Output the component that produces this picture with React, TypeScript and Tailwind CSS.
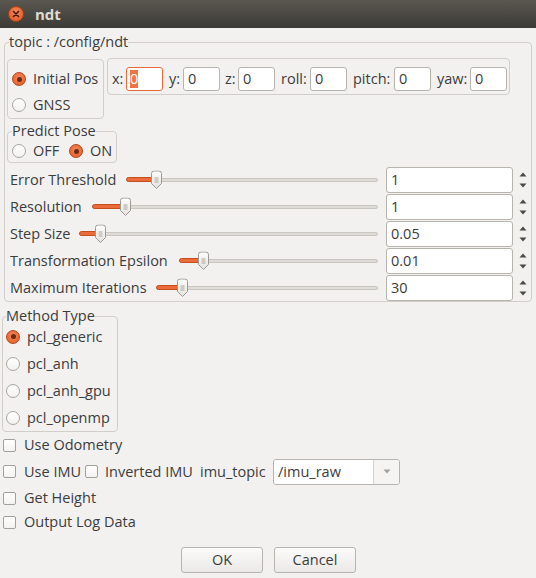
import React from 'react';

const Radio = ({ checked }: { checked?: boolean }) =>
  checked ? (
    <span className="w-[14px] h-[14px] rounded-full border border-[#b8461a] bg-[radial-gradient(circle_at_50%_40%,#f68a5c,#e2561f)] flex items-center justify-center shrink-0">
      <span className="w-[5px] h-[5px] rounded-full bg-[#6b2a12]" />
    </span>
  ) : (
    <span className="w-[14px] h-[14px] rounded-full border border-[#a9a6a0] bg-linear-to-b from-white to-[#f3f2f0] shrink-0" />
  );

const Check = () => (
  <span className="w-[13px] h-[13px] rounded-[2px] border border-[#a3a09a] bg-linear-to-b from-white to-[#f3f2f0] shrink-0" />
);

const Handle = ({ left }: { left: number }) => (
  <svg
    width="13"
    height="19"
    viewBox="0 0 13 19"
    className="absolute top-1/2 -translate-y-1/2"
    style={{ left }}
  >
    <defs>
      <linearGradient id="hg" x1="0" y1="0" x2="0" y2="1">
        <stop offset="0" stopColor="#fdfdfc" />
        <stop offset="1" stopColor="#e4e2de" />
      </linearGradient>
    </defs>
    <path
      d="M1.5 3 Q1.5 0.5 4 0.5 H9 Q11.5 0.5 11.5 3 V13 L6.5 18 L1.5 13 Z"
      fill="url(#hg)"
      stroke="#9c9993"
    />
    <path d="M4.5 7.5 H8.5 M4.5 9.5 H8.5 M4.5 11.5 H8.5" stroke="#a9a69f" strokeWidth="1" />
  </svg>
);

const Slider = ({ pos }: { pos: number }) => (
  <div className="flex-1 relative h-full flex items-center">
    <div className="w-full h-[4px] rounded-full bg-[#dedcd8] border border-[#c9c6c0]" />
    <div
      className="absolute left-0 h-[5px] rounded-full bg-[#ec6b3a] border border-[#c44f1e]"
      style={{ width: pos + 2 }}
    />
    <Handle left={pos - 6} />
  </div>
);

const SpinArrows = () => (
  <div className="w-[18px] flex flex-col items-center justify-center gap-[6px] pl-[1px]">
    <svg width="8" height="5" viewBox="0 0 8 5">
      <path d="M4 0.5 L7.5 4.5 H0.5 Z" fill="#4a4a4a" />
    </svg>
    <svg width="8" height="5" viewBox="0 0 8 5">
      <path d="M0.5 0.5 H7.5 L4 4.5 Z" fill="#4a4a4a" />
    </svg>
  </div>
);

const sliders = [
  { label: 'Error Threshold', w: 'w-[116px]', pos: 30, value: '1' },
  { label: 'Resolution', w: 'w-[82px]', pos: 33, value: '1' },
  { label: 'Step Size', w: 'w-[69px]', pos: 21, value: '0.05' },
  { label: 'Transformation Epsilon', w: 'w-[169px]', pos: 24, value: '0.01' },
  { label: 'Maximum Iterations', w: 'w-[146px]', pos: 26, value: '30' },
];

const coords = [
  { label: 'x:', w: 'w-[14px]', ml: '' },
  { label: 'y:', w: 'w-[14px]', ml: 'ml-[6px]' },
  { label: 'z:', w: 'w-[13px]', ml: 'ml-[5px]' },
  { label: 'roll:', w: 'w-[29px]', ml: 'ml-[6px]' },
  { label: 'pitch:', w: 'w-[41px]', ml: 'ml-[6px]' },
  { label: 'yaw:', w: 'w-[33px]', ml: 'ml-[6px]' },
];

const methods = ['pcl_generic', 'pcl_anh', 'pcl_anh_gpu', 'pcl_openmp'];

export default function App() {
  return (
    <div className="w-[536px] h-[578px] bg-[#f2f1f0] flex flex-col font-['Open_Sans',sans-serif] text-[14.5px] leading-[18px] text-[#3c3c3c] overflow-hidden">
      {/* title bar */}
      <div className="h-[28px] shrink-0 flex items-center pl-[8px] bg-linear-to-b from-[#5a5750] to-[#3c3b37]">
        <span className="w-[16px] h-[16px] rounded-full border border-[#a8411a] bg-[radial-gradient(circle_at_50%_35%,#f58657,#df5420)] flex items-center justify-center">
          <svg width="8" height="8" viewBox="0 0 8 8">
            <path d="M1.5 1.5 L6.5 6.5 M6.5 1.5 L1.5 6.5" stroke="#4a1a08" strokeWidth="1.6" strokeLinecap="round" />
          </svg>
        </span>
        <span className="ml-[11px] text-[15px] font-bold text-[#dfdbd2]">ndt</span>
      </div>

      {/* topic group */}
      <fieldset className="ml-[4px] mt-[5px] w-[528px] border border-[#d2cfca] rounded-[4px]">
        <legend className="ml-[4px]">topic : /config/ndt</legend>
        <div className="flex flex-col pl-[2px] pt-[7px]">
          <div className="flex items-start gap-[3px]">
            <div className="mt-[1px] w-[97px] h-[60px] border border-[#d2cfca] rounded-[4px] pt-[6px] pl-[4px] flex flex-col">
              <div className="h-[26px] flex items-center gap-[7px]">
                <Radio checked />
                <span>Initial Pos</span>
              </div>
              <div className="h-[26px] flex items-center gap-[7px]">
                <Radio />
                <span>GNSS</span>
              </div>
            </div>
            <div className="w-[403px] h-[37px] border border-[#d2cfca] rounded-[4px] pt-[8px] pl-[4px] flex items-start">
              {coords.map((c, i) => (
                <div key={c.label} className={`flex items-center ${c.ml}`}>
                  <span className={`${c.w} h-[24px] flex items-center`}>{c.label}</span>
                  {i === 0 ? (
                    <div className="w-[37px] h-[24px] bg-white border border-[#e8683a] rounded-[3px] flex items-center pl-[3px]">
                      <span className="bg-[#ef7444] text-white leading-[18px]">0</span>
                    </div>
                  ) : (
                    <div className="w-[37px] h-[24px] bg-white border border-[#b7b4ae] rounded-[3px] flex items-center pl-[4px]">
                      0
                    </div>
                  )}
                </div>
              ))}
            </div>
          </div>

          <fieldset className="mt-[3px] w-[110px] border border-[#d2cfca] rounded-[4px]">
            <legend className="ml-[4px]">Predict Pose</legend>
            <div className="h-[22px] flex items-center pl-[4px]">
              <Radio />
              <span className="ml-[7px] w-[36px]">OFF</span>
              <Radio checked />
              <span className="ml-[7px]">ON</span>
            </div>
          </fieldset>

          <div className="mt-[3px] flex flex-col">
            {sliders.map((s) => (
              <div key={s.label} className="h-[27px] flex items-center pl-[3px]">
                <span className={`${s.w} shrink-0 whitespace-nowrap`}>{s.label}</span>
                <Slider pos={s.pos} />
                <div className="ml-[8px] w-[127px] h-[26px] bg-white border border-[#b7b4ae] rounded-[3px] flex items-center pl-[4px] shrink-0">
                  {s.value}
                </div>
                <SpinArrows />
              </div>
            ))}
          </div>
        </div>
      </fieldset>

      {/* method type */}
      <fieldset className="ml-[2px] mt-[5px] w-[116px] border border-[#d2cfca] rounded-[4px]">
        <legend className="ml-[3px]">Method Type</legend>
        <div className="mt-[-2px] flex flex-col pl-[3px]">
          {methods.map((m, i) => (
            <div key={m} className="h-[27px] flex items-center gap-[7px]">
              <Radio checked={i === 0} />
              <span>{m}</span>
            </div>
          ))}
        </div>
      </fieldset>

      {/* checkboxes */}
      <div className="flex flex-col pl-[3px]">
        <div className="h-[26px] flex items-center gap-[8px]">
          <Check />
          <span>Use Odometry</span>
        </div>
        <div className="h-[27px] flex items-center">
          <Check />
          <span className="ml-[8px] w-[61px] whitespace-nowrap">Use IMU</span>
          <Check />
          <span className="ml-[7px] w-[95px] whitespace-nowrap">Inverted IMU</span>
          <span className="w-[73px]">imu_topic</span>
          <div className="w-[127px] h-[26px] flex border border-[#b7b4ae] rounded-[3px] overflow-hidden">
            <div className="flex-1 bg-white flex items-center pl-[4px]">/imu_raw</div>
            <div className="w-[26px] border-l border-[#d6d3ce] bg-[#f5f4f2] flex items-center justify-center">
              <svg width="8" height="5" viewBox="0 0 8 5">
                <path d="M0.5 0.5 H7.5 L4 4.5 Z" fill="#a3a19d" />
              </svg>
            </div>
          </div>
        </div>
        <div className="h-[26px] flex items-center gap-[8px]">
          <Check />
          <span>Get Height</span>
        </div>
        <div className="h-[22px] flex items-center gap-[8px]">
          <Check />
          <span>Output Log Data</span>
        </div>
      </div>

      {/* buttons */}
      <div className="mt-[14px] flex justify-center gap-[11px] pl-[1px]">
        <button className="w-[82px] h-[26px] border border-[#b7b4ae] rounded-[3px] bg-linear-to-b from-[#fbfbfa] to-[#ebe9e6] text-[#3c3c3c]">
          OK
        </button>
        <button className="w-[82px] h-[26px] border border-[#b7b4ae] rounded-[3px] bg-linear-to-b from-[#fbfbfa] to-[#ebe9e6] text-[#3c3c3c]">
          Cancel
        </button>
      </div>
    </div>
  );
}
